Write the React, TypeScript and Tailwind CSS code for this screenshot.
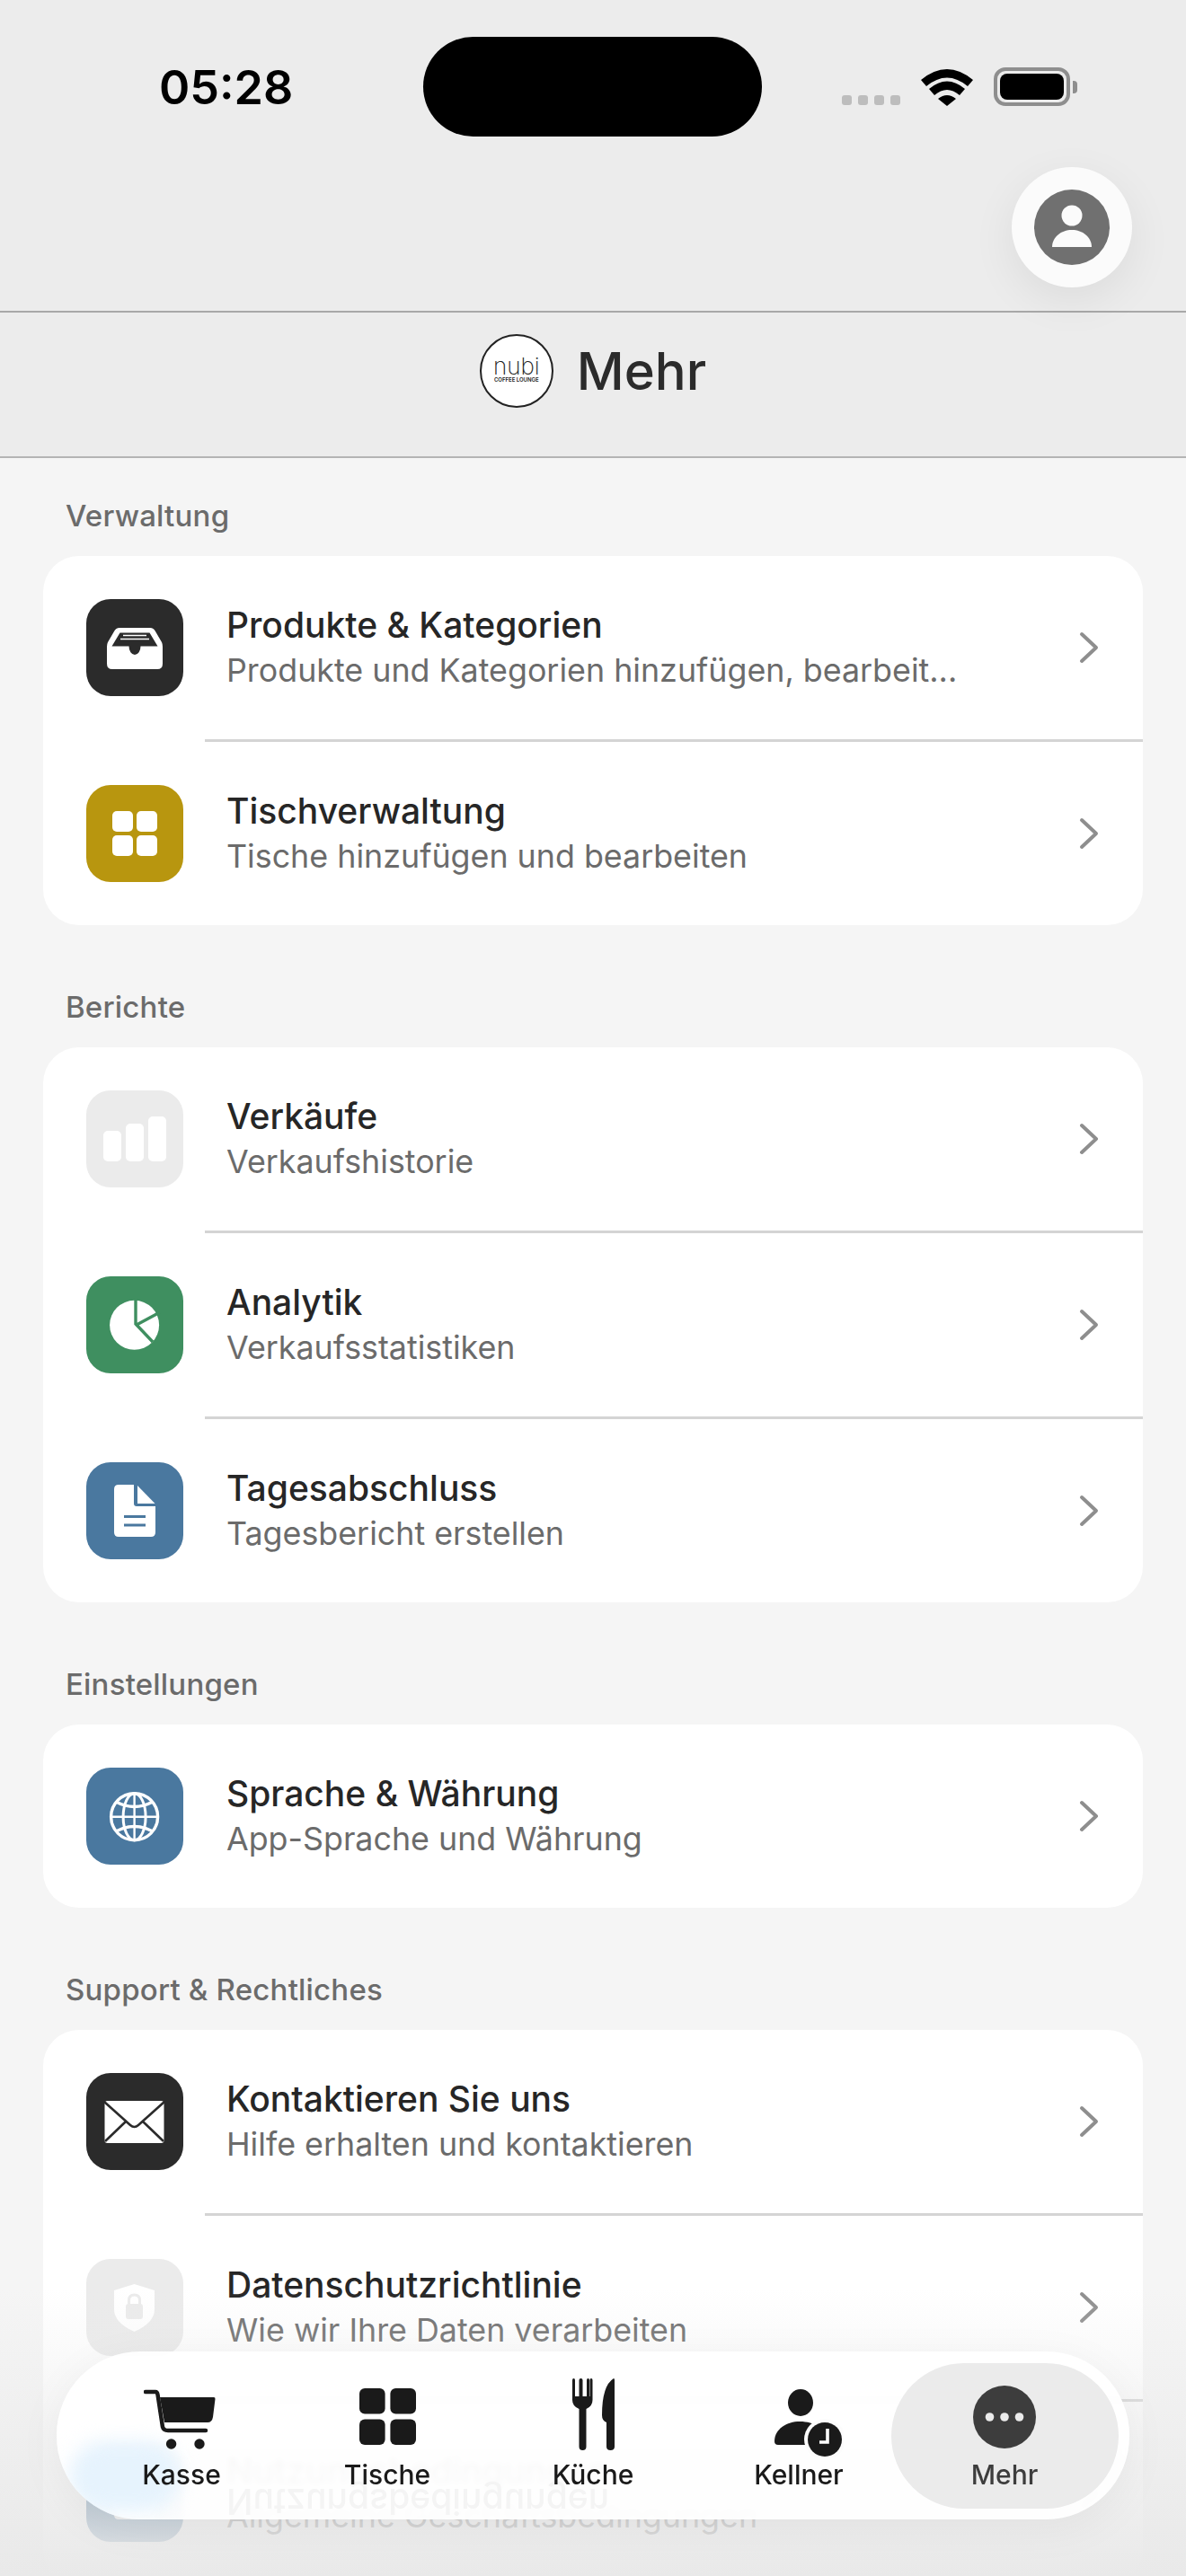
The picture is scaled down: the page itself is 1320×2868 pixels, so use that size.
import React from 'react';

const font = { fontFamily: 'Inter, "Noto Sans", sans-serif' };

const IconTray = () => (
  <svg viewBox="0 0 108 108" className="w-[108px] h-[108px]">
    <path d="M31 36Q33 32 37 32H71Q75 32 77 36L84 48Q85 50 85 53V72Q85 78 79 78H29Q23 78 23 72V53Q23 50 24 48Z" fill="#fff" />
    <path d="M28.5 52.5L37.5 37.5H70.5L79.5 52.5H60.5A6.5 9.5 0 0 1 47.5 52.5Z" fill="#2b2b2b" />
    <path d="M41 40.5H67M38 44.5H70" stroke="#fff" strokeWidth="1.5" />
  </svg>
);

const IconGrid = () => (
  <svg viewBox="0 0 108 108" className="w-[108px] h-[108px]" fill="#fff">
    <rect x="29" y="29" width="23" height="23" rx="5" />
    <rect x="56" y="29" width="23" height="23" rx="5" />
    <rect x="29" y="56" width="23" height="23" rx="5" />
    <rect x="56" y="56" width="23" height="23" rx="5" />
  </svg>
);

const IconBars = () => (
  <svg viewBox="0 0 108 108" className="w-[108px] h-[108px]" fill="#fff">
    <rect x="19" y="45" width="20" height="34" rx="5" />
    <rect x="44" y="37" width="20" height="42" rx="5" />
    <rect x="69" y="29" width="20" height="50" rx="5" />
  </svg>
);

const IconPie = () => (
  <svg viewBox="0 0 108 108" className="w-[108px] h-[108px]">
    <circle cx="53.6" cy="54.3" r="27.5" fill="#fff" />
    <path d="M55 24V53L74 73M56 54L82 40" fill="none" stroke="#3f8f60" strokeWidth="3.4" />
  </svg>
);

const IconDoc = () => (
  <svg viewBox="0 0 108 108" className="w-[108px] h-[108px]">
    <path d="M36 25H53V46Q53 49 56 49H77V78Q77 83 72 83H36Q31 83 31 78V30Q31 25 36 25Z" fill="#fff" />
    <path d="M57 26L76.5 46H57Z" fill="#fff" />
    <path d="M42 60.5H66M42 70H66" stroke="#4a789f" strokeWidth="2.8" />
  </svg>
);

const IconGlobe = () => (
  <svg viewBox="0 0 108 108" className="w-[108px] h-[108px]" fill="none" stroke="#fff">
    <circle cx="53.6" cy="54.7" r="26" strokeWidth="3.4" />
    <ellipse cx="53.6" cy="54.7" rx="12.5" ry="26" strokeWidth="3" />
    <path d="M53.6 28V81M27 54.7H80" strokeWidth="2.4" />
    <path d="M33 38Q53.6 49 74 38M33 71Q53.6 60 74 71" strokeWidth="3.4" />
  </svg>
);

const IconMail = () => (
  <svg viewBox="0 0 108 108" className="w-[108px] h-[108px]">
    <rect x="20.5" y="31" width="66" height="47" rx="3" fill="#fff" />
    <path d="M20 32L49 58Q53.5 62 58 58L87 32M21 76L44 54M86 76L63 54" fill="none" stroke="#2b2b2b" strokeWidth="2.6" />
  </svg>
);

const IconShield = () => (
  <svg viewBox="0 0 108 108" className="w-[108px] h-[108px]">
    <path d="M53.5 28L76 35V56Q76 71 53.5 81Q31 71 31 56V35Z" fill="#fff" strokeLinejoin="round" />
    <rect x="44" y="50" width="19" height="17" rx="3" fill="#ebebeb" />
    <path d="M47.5 51V46Q47.5 40 53.5 40Q59.5 40 59.5 46V51" fill="none" stroke="#ebebeb" strokeWidth="3" />
  </svg>
);

const Chevron = () => (
  <svg viewBox="0 0 24 36" className="w-[24px] h-[36px]" fill="none" stroke="#8e8e8e" strokeWidth="4" strokeLinecap="round" strokeLinejoin="round">
    <path d="M4 3L20 18L4 33" />
  </svg>
);

const sections = [
  {
    label: 'Verwaltung',
    rows: [
      { title: 'Produkte & Kategorien', sub: 'Produkte und Kategorien hinzufügen, bearbeit...', bg: 'bg-[#2b2b2b]', icon: <IconTray /> },
      { title: 'Tischverwaltung', sub: 'Tische hinzufügen und bearbeiten', bg: 'bg-[#b8960f]', icon: <IconGrid /> },
    ],
  },
  {
    label: 'Berichte',
    rows: [
      { title: 'Verkäufe', sub: 'Verkaufshistorie', bg: 'bg-[#ebebeb]', icon: <IconBars /> },
      { title: 'Analytik', sub: 'Verkaufsstatistiken', bg: 'bg-[#3f8f60]', icon: <IconPie /> },
      { title: 'Tagesabschluss', sub: 'Tagesbericht erstellen', bg: 'bg-[#4a789f]', icon: <IconDoc /> },
    ],
  },
  {
    label: 'Einstellungen',
    rows: [{ title: 'Sprache & Währung', sub: 'App-Sprache und Währung', bg: 'bg-[#4a789f]', icon: <IconGlobe /> }],
  },
  {
    label: 'Support & Rechtliches',
    rows: [
      { title: 'Kontaktieren Sie uns', sub: 'Hilfe erhalten und kontaktieren', bg: 'bg-[#2b2b2b]', icon: <IconMail /> },
      { title: 'Datenschutzrichtlinie', sub: 'Wie wir Ihre Daten verarbeiten', bg: 'bg-[#ebebeb]', icon: <IconShield /> },
      { title: 'Nutzungsbedingungen', sub: 'Allgemeine Geschäftsbedingungen', bg: 'bg-[#4a789f]', icon: <IconDoc /> },
    ],
  },
];

const StatusBar = () => (
  <div className="relative h-[348px] border-b-2 border-[#a8a8a8]">
    <div className="flex items-start h-[152px]">
      <div className="w-[471px] pt-[66px] pl-[177px] text-[52px] leading-[64px] font-semibold text-black">05:28</div>
      <div className="w-[377px] h-[111px] mt-[41px] rounded-[56px] bg-black" />
      <div className="flex items-end pt-[75px] pl-[89px]">
        <div className="flex gap-[7px] pb-[1px]">
          <span className="w-[11px] h-[11px] rounded-[3px] bg-[#bdbdbd]" />
          <span className="w-[11px] h-[11px] rounded-[3px] bg-[#bdbdbd]" />
          <span className="w-[11px] h-[11px] rounded-[3px] bg-[#bdbdbd]" />
          <span className="w-[11px] h-[11px] rounded-[3px] bg-[#bdbdbd]" />
        </div>
        <svg viewBox="0 0 58 43" className="w-[58px] h-[43px] ml-[23px]">
          <path d="M0 14Q29 -10 58 14L52 21Q29 2 6 21Z M9 24Q29 7 49 24L43 31Q29 19 15 31Z M19 35Q29 27 39 35L29 43Z" fill="#000" />
        </svg>
        <div className="flex items-center ml-[23px]">
          <div className="w-[85px] h-[43px] rounded-[13px] border-[4px] border-[#8e8e8e] p-[3px]">
            <div className="w-full h-full rounded-[8px] bg-black" />
          </div>
          <div className="w-[5px] h-[14px] rounded-r-[4px] bg-[#8e8e8e] ml-[3px]" />
        </div>
      </div>
    </div>
  </div>
);

const ProfileButton = () => (
  <div className="absolute left-[1126px] top-[186px] w-[134px] h-[134px] rounded-full bg-[#fbfbfb] shadow-[0_14px_50px_rgba(0,0,0,0.07)] flex items-center justify-center z-10">
    <svg viewBox="0 0 84 84" className="w-[84px] h-[84px]">
      <circle cx="42" cy="42" r="42" fill="#707070" />
      <circle cx="42" cy="29" r="11.5" fill="#fbfbfb" />
      <path d="M20 64C20 53 30 45 42 45C54 45 64 53 64 64Z" fill="#fbfbfb" />
    </svg>
  </div>
);

const Logo = () => (
  <div className="w-[82px] h-[82px] rounded-full bg-white border-2 border-[#222] flex flex-col items-center justify-center text-[#222]">
    <div className="text-[26px] leading-[20px] font-extralight">nubi</div>
    <div className="text-[6px] leading-[9px] font-semibold whitespace-nowrap">COFFEE LOUNGE</div>
  </div>
);

const MenuRow = ({ row }: { row: (typeof sections)[number]['rows'][number] }) => (
  <div className="h-[204px] flex items-center pl-[48px] pr-[48px]">
    <div className={`w-[108px] h-[108px] rounded-[27px] shrink-0 ${row.bg}`}>{row.icon}</div>
    <div className="ml-[48px] flex-1 min-w-0">
      <div className="text-[39px] leading-[51px] font-medium text-[#262626]">{row.title}</div>
      <div className="text-[35.8px] leading-[51px] text-[#6b6b6b] whitespace-nowrap">{row.sub}</div>
    </div>
    <Chevron />
  </div>
);

const TabLabel = ({ children, dark }: { children: React.ReactNode; dark?: boolean }) => (
  <div className={`absolute top-[106px] left-0 right-0 text-center text-[30px] leading-[36px] font-medium ${dark ? 'text-[#3d3d3d]' : 'text-[#1a1a1a]'}`}>{children}</div>
);

const TabBar = () => (
  <div className="absolute left-[63px] top-[2618px] w-[1194px] h-[187px] rounded-[93px] bg-white/[0.93] backdrop-blur-[3px] shadow-[0_10px_50px_rgba(0,0,0,0.05)] z-20 flex items-start justify-center pt-[13px] overflow-hidden">
    {/* glass reflection of the row underneath */}
    <div className="absolute left-[14px] top-[100px] w-[124px] h-[78px] rounded-[40px] bg-[#e6f3fd] blur-[10px]" />
    <div className="absolute left-[189px] top-[147px] text-[39px] leading-[40px] font-medium text-[#f4f4f4] scale-y-[-1] whitespace-nowrap">Nutzungsbedingungen</div>
    <div className="relative w-[229px] h-[160px]">
      <svg viewBox="0 0 80 67" className="absolute left-[72px] top-[29px] w-[80px] h-[67px]" fill="#1a1a1a">
        <path d="M2 3H13Q15 3 15.5 6L21 42Q22 46 27 46H69" fill="none" stroke="#1a1a1a" strokeWidth="4.5" strokeLinecap="round" />
        <path d="M18 9H78Q79.8 9 79.5 11L77 31Q76 37 71 37H23Z" />
        <circle cx="30.6" cy="61" r="5.7" />
        <circle cx="62" cy="61" r="5.7" />
      </svg>
      <TabLabel>Kasse</TabLabel>
    </div>
    <div className="relative w-[229px] h-[160px]">
      <svg viewBox="0 0 63 63" className="absolute left-[83px] top-[28px] w-[63px] h-[63px]" fill="#1a1a1a">
        <rect width="28.6" height="28.6" rx="6" />
        <rect x="34.4" width="28.6" height="28.6" rx="6" />
        <rect y="34.4" width="28.6" height="28.6" rx="6" />
        <rect x="34.4" y="34.4" width="28.6" height="28.6" rx="6" />
      </svg>
      <TabLabel>Tische</TabLabel>
    </div>
    <div className="relative w-[229px] h-[160px]">
      <svg viewBox="0 0 48 80" className="absolute left-[91px] top-[17px] w-[48px] h-[80px]" fill="#1a1a1a">
        <path d="M0 2Q0 0 1.5 0Q3 0 3 2V20H7.5V2Q7.5 0 9.5 0Q11.5 0 11.5 2V20H16V2Q16 0 17.5 0Q19 0 19 2V20H19.5V2Q19.5 0 21 0Q22.5 0 22.5 2V24Q22.5 31 15.5 34V76Q15.5 80 11.5 80Q7.5 80 7.5 76V34Q0 31 0 24Z" />
        <path d="M46 0Q47 0 47 2V76Q47 80 42.5 80Q38 80 38 76V49Q33 47 33 41Q33 8 46 0Z" />
      </svg>
      <TabLabel>Küche</TabLabel>
    </div>
    <div className="relative w-[229px] h-[160px]">
      <svg viewBox="0 0 78 76" className="absolute left-[86px] top-[29px] w-[78px] h-[76px]">
        <ellipse cx="30" cy="15" rx="14" ry="15" fill="#1a1a1a" />
        <path d="M1 58C1 44 15 36 29 36C38 36 44 38 50 42L40 62H5Q1 62 1 58Z" fill="#1a1a1a" />
        <circle cx="57" cy="56" r="23" fill="#fcfcfc" />
        <circle cx="57" cy="56" r="19" fill="#1a1a1a" />
        <path d="M60 44V59H51" fill="none" stroke="#fff" strokeWidth="3.6" />
      </svg>
      <TabLabel>Kellner</TabLabel>
    </div>
    <div className="relative w-[253px] h-[162px] -mx-[12px] rounded-[81px] bg-[#ebebeb]">
      <svg viewBox="0 0 70 70" className="absolute left-[91px] top-[25px] w-[70px] h-[70px]">
        <circle cx="35" cy="35" r="35" fill="#3d3d3d" />
        <circle cx="18.5" cy="35" r="4.8" fill="#ebebeb" />
        <circle cx="35" cy="35" r="4.8" fill="#ebebeb" />
        <circle cx="51.5" cy="35" r="4.8" fill="#ebebeb" />
      </svg>
      <TabLabel dark>Mehr</TabLabel>
    </div>
  </div>
);

export default function App() {
  return (
    <div style={font} className="relative w-[1320px] h-[2868px] overflow-hidden bg-[#f5f5f5]">
      <header className="bg-[#ececec]">
        <StatusBar />
        <div className="h-[162px] border-b-2 border-[#b4b4b4] flex items-center justify-center gap-[26px] pb-[31px]">
          <Logo />
          <div className="text-[58px] leading-[70px] font-medium text-[#2b2b2b]">Mehr</div>
        </div>
      </header>
      <ProfileButton />

      <main className="px-[48px] pt-[42px]">
        {sections.map((section, i) => (
          <section key={section.label} className={i > 0 ? 'mt-[69px]' : ''}>
            <div className="pl-[25px] mb-[23px] text-[33px] leading-[44px] font-medium text-[#6b6b6b] tracking-[0.2px]">{section.label}</div>
            <div className="rounded-[40px] bg-white">
              {section.rows.map((row, j) => (
                <div key={row.title}>
                  {j > 0 && <div className="ml-[180px] h-[3px] bg-[#d4d4d4]" />}
                  <MenuRow row={row} />
                </div>
              ))}
            </div>
          </section>
        ))}
      </main>

      <div className="absolute left-0 right-0 bottom-0 h-[320px] bg-gradient-to-b from-[#e9e9e9]/0 to-[#e9e9e9] z-10" />
      <TabBar />
    </div>
  );
}
